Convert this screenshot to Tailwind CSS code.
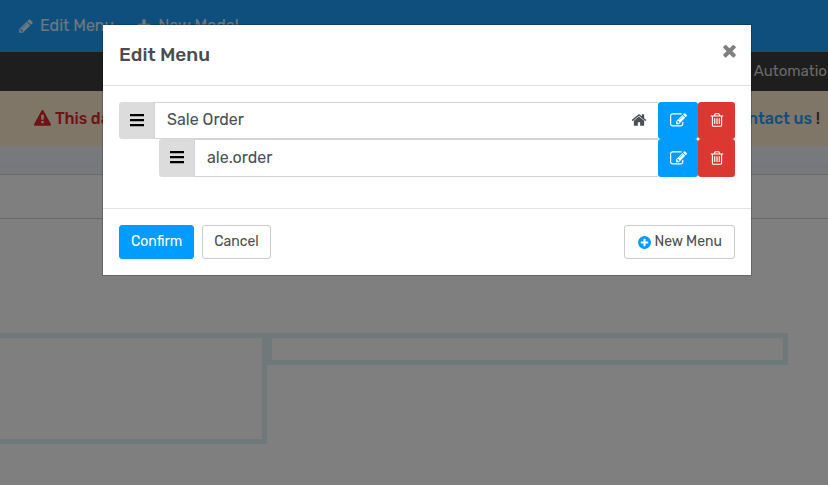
<!DOCTYPE html>
<html lang="en">
<head>
<meta charset="utf-8">
<meta name="viewport" content="width=device-width, initial-scale=1">
<title>Edit Menu</title>
<script src="https://cdn.jsdelivr.net/npm/@tailwindcss/browser@4"></script>
</head>
<body class="min-h-screen overflow-hidden bg-white font-[Rubik,Roboto,sans-serif] text-base text-[#4c4c4c]">
<svg class="hidden" aria-hidden="true">
  <symbol id="pencil" viewBox="0 0 1792 1792"><path d="M491 1536l91-91-235-235-91 91v107h128v128h107zm523-928q0-22-22-22-10 0-17 7l-542 542q-7 7-7 17 0 22 22 22 10 0 17-7l542-542q7-7 7-17zm-54-192l416 416-832 832h-416v-416zm683 96q0 53-37 90l-166 166-416-416 166-165q36-38 90-38 53 0 91 38l235 234q37 39 37 91z"/></symbol>
  <symbol id="plus" viewBox="0 0 1792 1792"><path d="M1600 736v192q0 40-28 68t-68 28h-416v416q0 40-28 68t-68 28h-192q-40 0-68-28t-28-68v-416h-416q-40 0-68-28t-28-68v-192q0-40 28-68t68-28h416v-416q0-40 28-68t68-28h192q40 0 68 28t28 68v416h416q40 0 68 28t28 68z"/></symbol>
  <symbol id="warning" viewBox="0 0 1792 1792"><path d="M1024 1375v-190q0-14-9.5-23.5t-22.5-9.5h-192q-13 0-22.5 9.5t-9.5 23.5v190q0 14 9.5 23.5t22.5 9.5h192q13 0 22.5-9.5t9.5-23.5zm-2-374l18-459q0-12-10-19-13-11-24-11h-220q-11 0-24 11-10 7-10 21l17 457q0 10 10 16.5t24 6.5h185q14 0 23.5-6.5t10.5-16.5zm-14-934l768 1408q35 63-2 126-17 29-46.5 46t-63.5 17h-1536q-34 0-63.5-17t-46.5-46q-37-63-2-126l768-1408q17-31 47-49t65-18 65 18 47 49z"/></symbol>
  <symbol id="bars" viewBox="0 0 16 16"><path d="M1 1h14v2.300H1zM1 6h14v2.300H1zM1 11h14v2.300H1z"/></symbol>
  <symbol id="home" viewBox="0 0 1792 1792"><path d="M1472 992v480q0 26-19 45t-45 19h-384v-384h-256v384h-384q-26 0-45-19t-19-45v-480q0-1 .5-3t.5-3l575-474 575 474q1 2 1 6zm223-69l-62 74q-8 9-21 11h-3q-13 0-21-7l-692-577-692 577q-12 8-24 7-13-2-21-11l-62-74q-8-10-7-23.5t11-21.500l719-599q32-26 76-26t76 26l244 204v-195q0-14 9-23t23-9h192q14 0 23 9t9 23v408l219 182q10 8 11 21.500t-7 23.500z"/></symbol>
  <symbol id="edit" viewBox="0 0 1792 1792"><path d="M888 1184l116-116-152-152-116 116v56h96v96h56zm440-720q-16-16-33 1l-350 350q-17 17-1 33t33-1l350-350q17-17 1-33zm80 594v190q0 119-84.5 203.5t-203.5 84.5h-832q-119 0-203.5-84.5t-84.5-203.5v-832q0-119 84.5-203.5t203.5-84.5h832q63 0 117 25 15 7 18 23 3 17-9 29l-49 49q-14 14-32 8-23-6-45-6h-832q-66 0-113 47t-47 113v832q0 66 47 113t113 47h832q66 0 113-47t47-113v-126q0-13 9-22l64-64q15-15 35-7t20 29zm-96-738l288 288-672 672h-288v-288zm444 132l-92 92-288-288 92-92q28-28 68-28t68 28l152 152q28 28 28 68t-28 68z"/></symbol>
  <symbol id="trash" viewBox="0 0 1792 1792"><path d="M704 736v576q0 14-9 23t-23 9h-64q-14 0-23-9t-9-23v-576q0-14 9-23t23-9h64q14 0 23 9t9 23zm256 0v576q0 14-9 23t-23 9h-64q-14 0-23-9t-9-23v-576q0-14 9-23t23-9h64q14 0 23 9t9 23zm256 0v576q0 14-9 23t-23 9h-64q-14 0-23-9t-9-23v-576q0-14 9-23t23-9h64q14 0 23 9t9 23zm128 724v-948h-896v948q0 22 7 40.5t14.5 27 10.5 8.5h832q3 0 10.5-8.5t14.5-27 7-40.5zm-672-1076h448l-48-117q-7-9-17-11h-317q-10 2-17 11zm928 32v64q0 14-9 23t-23 9h-96v948q0 83-47 143.5t-113 60.5h-832q-66 0-113-58.5t-47-141.5v-952h-96q-14 0-23-9t-9-23v-64q0-14 9-23t23-9h309l70-167q15-37 54-63t79-26h320q40 0 79 26t54 63l70 167h309q14 0 23 9t9 23z"/></symbol>
  <symbol id="plus-circle" viewBox="0 0 1792 1792"><path d="M1344 960v-128q0-26-19-45t-45-19h-256v-256q0-26-19-45t-45-19h-128q-26 0-45 19t-19 45v256h-256q-26 0-45 19t-19 45v128q0 26 19 45t45 19h256v256q0 26 19 45t45 19h128q26 0 45-19t19-45v-256h256q26 0 45-19t19-45zm320-64q0 209-103 385.5t-279.5 279.5-385.5 103-385.5-103-279.5-279.5-103-385.5 103-385.5 279.5-279.5 385.5-103 385.5 103 279.5 279.5 103 385.5z"/></symbol>
  <symbol id="times" viewBox="0 0 1792 1792"><path d="M1490 1322q0 40-28 68l-136 136q-28 28-68 28t-68-28l-294-294-294 294q-28 28-68 28t-68-28l-136-136q-28-28-28-68t28-68l294-294-294-294q-28-28-28-68t28-68l136-136q28-28 68-28t68 28l294 294 294-294q28-28 68-28t68 28l136 136q28 28 28 68t-28 68l-294 294 294 294q28 28 28 68z"/></symbol>
</svg>

<nav class="flex h-[52px] items-center gap-[22px] bg-[#1e9efa] px-[18px] text-base text-white/85">
  <a href="#" class="flex items-center gap-1.5"><svg class="size-4 fill-current"><use href="#pencil"/></svg>Edit Menu</a>
  <a href="#" class="flex items-center gap-1.5"><svg class="size-4 fill-current"><use href="#plus"/></svg>New Model</a>
</nav>
<div class="flex h-[39px] items-center justify-end overflow-hidden bg-[#3c3c3c] text-[15px] text-[#d4d4d4]">
  <a href="#" class="-mr-2">Automation</a>
</div>
<div class="flex h-[55px] items-center justify-between bg-[#ffecd0] pl-[34px] pr-2 font-medium">
  <strong class="flex items-center gap-1 font-medium text-[#dc2626]"><svg class="size-[17px] fill-current"><use href="#warning"/></svg>This database</strong>
  <span><a href="#" class="text-[#1e9efa]">contact us</a> !</span>
</div>
<div class="h-[29px] border-b border-[#d0d0d0] bg-linear-to-b from-[#f0f4fa] to-[#ecf0f4]"></div>
<div class="h-11 border-b border-[#d0d0d0]"></div>
<main class="mt-[114px] flex items-start pr-10">
  <section class="h-[111px] w-[267px] border-5 border-l-0 border-[#dff0f7]"></section>
  <section class="h-8 flex-1 border-5 border-[#dff0f7]"></section>
</main>

<div class="fixed inset-0 bg-black/50 pl-[26px] pt-6">
  <div role="dialog" aria-modal="true" aria-labelledby="title" class="mx-auto max-w-[650px] border border-black/20 bg-white bg-clip-padding">
    <header class="flex h-[61px] items-start justify-between border-b border-[#dee2e6] px-4 pt-4">
      <h1 id="title" class="text-[19px] font-medium">Edit Menu</h1>
      <button type="button" aria-label="Close" class="-mr-1 text-[#7f7f7f]"><svg class="size-[19px] fill-current"><use href="#times"/></svg></button>
    </header>
    <ul class="px-4 pb-[31px] pt-4 text-[#495057]">
      <li class="flex h-[37px]">
        <span class="flex w-9 items-center justify-center rounded-l-[3px] border-r border-[#ced4da] bg-[#dcdcdc] text-black"><svg class="size-4 fill-current"><use href="#bars"/></svg></span>
        <span class="flex min-w-0 flex-1 items-center border-y border-[#ced4da] pb-0.5 pl-3 pr-[11px]">
          <input type="text" aria-label="Menu label" value="Sale Order" class="min-w-0 flex-1 outline-none">
          <svg class="size-4 fill-current"><use href="#home"/></svg>
        </span>
        <button type="button" aria-label="Edit Sale Order" class="flex w-10 items-center justify-center rounded-[3px] bg-[#009dff] text-white"><svg class="size-[17px] fill-current"><use href="#edit"/></svg></button>
        <button type="button" aria-label="Delete Sale Order" class="flex w-[37px] items-center justify-center rounded-[3px] bg-[#db3832] pb-0.5 text-white"><svg class="size-4 fill-current"><use href="#trash"/></svg></button>
      </li>
      <li class="ml-10 flex h-[38px]">
        <span class="flex w-9 items-center justify-center rounded-l-[3px] border-r border-[#ced4da] bg-[#dcdcdc] text-black"><svg class="size-4 fill-current"><use href="#bars"/></svg></span>
        <span class="flex min-w-0 flex-1 items-center border-y border-[#ced4da] px-3">
          <input type="text" aria-label="Submenu label" value="ale.order" class="min-w-0 flex-1 outline-none">
        </span>
        <button type="button" aria-label="Edit ale.order" class="flex w-10 items-center justify-center rounded-[3px] bg-[#009dff] text-white"><svg class="size-[17px] fill-current"><use href="#edit"/></svg></button>
        <button type="button" aria-label="Delete ale.order" class="flex w-[37px] items-center justify-center rounded-[3px] bg-[#db3832] text-white"><svg class="size-4 fill-current"><use href="#trash"/></svg></button>
      </li>
    </ul>
    <footer class="flex gap-2 border-t border-[#dee2e6] p-4 text-sm">
      <button type="button" class="h-[34px] rounded-[3px] border border-[#009dff] bg-[#009dff] px-[11px] text-white">Confirm</button>
      <button type="button" class="h-[34px] rounded-[3px] border border-[#c9cccf] px-[11px]">Cancel</button>
      <button type="button" class="ml-auto flex h-[34px] items-center gap-0.5 rounded-[3px] border border-[#c9cccf] px-3"><svg class="size-[15px] fill-[#009dff]"><use href="#plus-circle"/></svg>New Menu</button>
    </footer>
  </div>
</div>
</body>
</html>
